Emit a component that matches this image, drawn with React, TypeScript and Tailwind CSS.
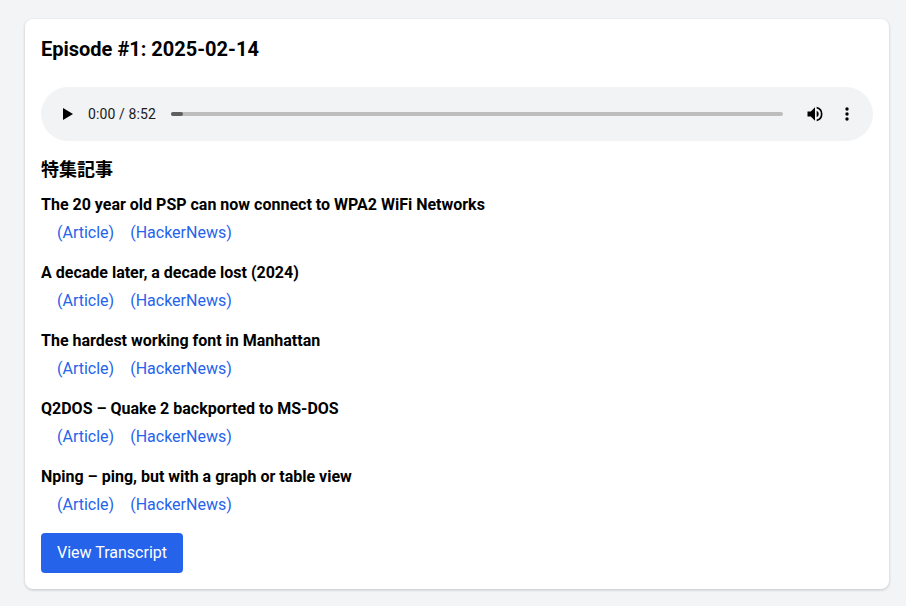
import React from "react";

const items = [
  "The 20 year old PSP can now connect to WPA2 WiFi Networks",
  "A decade later, a decade lost (2024)",
  "The hardest working font in Manhattan",
  "Q2DOS – Quake 2 backported to MS-DOS",
  "Nping – ping, but with a graph or table view",
];

export default function App() {
  return (
    <div className="h-[606px] overflow-hidden bg-[#f3f4f6] pl-[25px] pr-[17px] pt-[19px] font-['Roboto','Noto_Sans_CJK_JP',sans-serif] text-black">
      <div className="h-[570px] rounded-lg bg-white px-4 pt-4 shadow-[0_1px_3px_rgba(0,0,0,0.2)]">
        <h2 className="text-xl font-bold leading-7">Episode #1: 2025-02-14</h2>
        <div className="mt-[24px] flex h-[54px] items-center rounded-[27px] bg-[#f1f3f4] pl-[21px] pr-[24px]">
          <svg width="12" height="14" viewBox="0 0 12 14" className="mr-[14px]"><path d="M1 1v12l10-6z" fill="#000" /></svg>
          <span className="text-sm tracking-[0.12px] whitespace-nowrap text-[#1a1a1a]">0:00 / 8:52</span>
          <div className="relative ml-[15px] h-1 flex-1 rounded-full bg-[#bdbdbd]">
            <div className="absolute left-0 top-0 h-1 w-3 rounded-full bg-[#5f5f5f]" />
          </div>
          <svg width="20" height="20" viewBox="0 0 24 24" className="ml-[22px]" fill="#000"><path d="M3 9v6h4l5 5V4L7 9H3zm13.5 3A4.5 4.5 0 0 0 14 7.97v8.05A4.5 4.5 0 0 0 16.5 12zM14 3.23v2.06a7 7 0 0 1 0 13.42v2.06a9 9 0 0 0 0-17.54z" /></svg>
          <svg width="4" height="14" viewBox="0 0 4 14" className="ml-[20px]" fill="#000"><circle cx="2" cy="2" r="1.7" /><circle cx="2" cy="7" r="1.7" /><circle cx="2" cy="12" r="1.7" /></svg>
        </div>
        <h3 className="mt-[15px] text-lg font-bold leading-7">特集記事</h3>
        <ul className="mt-[9px] flex flex-col gap-4">
          {items.map((t) => (
            <li key={t}>
              <p className="text-base font-bold leading-6">{t}</p>
              <div className="mt-[4px] flex gap-4 pl-4 leading-6 text-[#2563eb]">
                <a>(Article)</a>
                <a>(HackerNews)</a>
              </div>
            </li>
          ))}
        </ul>
        <button className="mt-[16px] h-10 rounded bg-[#2563eb] px-4 text-base font-normal text-white">View Transcript</button>
      </div>
    </div>
  );
}
